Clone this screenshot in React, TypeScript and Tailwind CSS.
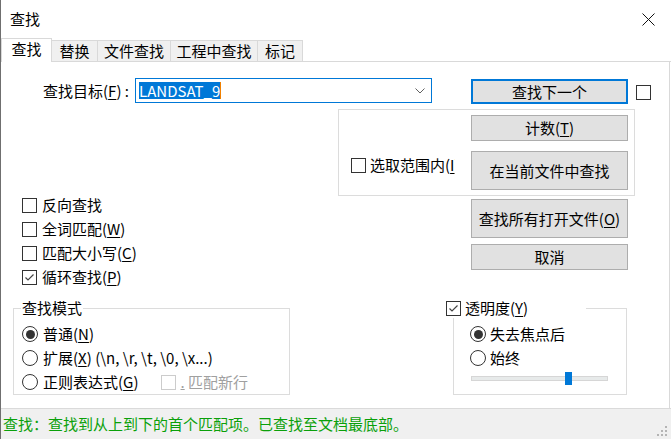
import type { ReactNode } from 'react';

function Key({ c }: { c: string }) {
  return (
    <>
      (<span className="underline underline-offset-2">{c}</span>)
    </>
  );
}

function Box({ checked = false, disabled = false }: { checked?: boolean; disabled?: boolean }) {
  return (
    <span
      className={`flex h-[15px] w-[15px] shrink-0 items-center justify-center border bg-white ${
        disabled ? 'border-[#cccccc]' : 'border-[#333333]'
      }`}
    >
      {checked && (
        <svg width="13" height="13" viewBox="0 0 13 13">
          <path d="M2.5 6.5 L5 9 L10.5 3.5" fill="none" stroke="#444" strokeWidth="1.2" />
        </svg>
      )}
    </span>
  );
}

function Radio({ checked = false }: { checked?: boolean }) {
  return (
    <span className="flex h-[16px] w-[16px] shrink-0 items-center justify-center rounded-full border border-[#333333] bg-white">
      {checked && <span className="h-[9px] w-[9px] rounded-full bg-[#333333]" />}
    </span>
  );
}

function Btn({ children, h, primary = false }: { children: ReactNode; h: string; primary?: boolean }) {
  return (
    <div
      className={`flex w-[157px] items-center justify-center bg-[#e1e1e1] ${h} ${
        primary ? 'border-2 border-[#0078d7]' : 'border border-[#adadad]'
      }`}
    >
      {children}
    </div>
  );
}

function Row({ children }: { children: ReactNode }) {
  return <div className="flex h-[24px] items-center gap-[5px] whitespace-nowrap">{children}</div>;
}

export default function App() {
  return (
    <div className="flex h-[439px] w-[671px] flex-col overflow-hidden border-l border-[#6f6f6f] bg-white font-['Noto_Sans_CJK_SC',sans-serif] text-[15px] leading-[20px] text-black">
      {/* title bar */}
      <div className="flex h-[38px] shrink-0 items-center justify-between pl-[9px] pr-[16px]">
        <span>查找</span>
        <svg width="13" height="13" viewBox="0 0 13 13">
          <path d="M0.5 0.5 L12.5 12.5 M12.5 0.5 L0.5 12.5" stroke="#111" strokeWidth="1" />
        </svg>
      </div>

      {/* tabs */}
      <div className="flex h-[24px] shrink-0 items-end">
        <div className="flex h-[24px] w-[51px] items-center justify-center border-x border-t border-[#d9d9d9] bg-white pb-[3px]">
          查找
        </div>
        {[
          ['替换', 'w-[46px]'],
          ['文件查找', 'w-[73px]'],
          ['工程中查找', 'w-[87px]'],
          ['标记', 'w-[45px]'],
        ].map(([t, w]) => (
          <div
            key={t}
            className={`flex h-[22px] items-center justify-center border-y border-r border-[#d9d9d9] bg-[#f0f0f0] ${w}`}
          >
            {t}
          </div>
        ))}
        <div className="h-[1px] flex-1 border-b border-[#d9d9d9]" />
      </div>

      {/* body */}
      <div className="mr-[1px] flex flex-1 flex-col border-r border-[#d9d9d9]">
        <div className="flex items-start pt-[16px]">
          <div className="flex h-[25px] w-[134px] items-center justify-end pr-[6px]">
            查找目标<Key c="F" />&nbsp;:
          </div>
          <div className="flex h-[25px] w-[297px] items-center border border-[#0078d7] pl-[3px] pr-[6px]">
            <span className="bg-[#0078d7] leading-[17px] text-white">LANDSAT_9</span>
            <span className="h-[17px] w-px bg-[#f08000]" />
            <span className="flex-1" />
            <svg width="10" height="6" viewBox="0 0 10 6">
              <path d="M0.5 0.5 L5 5 L9.5 0.5" fill="none" stroke="#606060" strokeWidth="1" />
            </svg>
          </div>
          <div className="ml-[39px] mt-[1px]">
            <Btn h="h-[25px]" primary>
              查找下一个
            </Btn>
          </div>
          <div className="ml-[8px] mt-[7px]">
            <Box />
          </div>
        </div>

        {/* scope group */}
        <div className="ml-[337px] mt-[5px] flex h-[87px] w-[297px] border border-[#dcdcdc]">
          <div className="ml-[12px] mt-[45px] flex h-[20px] w-[104px] items-center gap-[4px] overflow-hidden whitespace-nowrap">
            <Box />
            <span>
              选取范围内<Key c="I" />
            </span>
          </div>
          <div className="ml-[16px] flex flex-col gap-[10px] pt-[5px]">
            <Btn h="h-[26px]">
              <span>
                计数<Key c="T" />
              </span>
            </Btn>
            <Btn h="h-[39px]">在当前文件中查找</Btn>
          </div>
        </div>

        {/* options + buttons */}
        <div className="flex h-[102px]">
          <div className="-mt-[3px] flex w-[470px] flex-col pl-[21px]">
            <Row>
              <Box />
              <span>反向查找</span>
            </Row>
            <Row>
              <Box />
              <span>
                全词匹配<Key c="W" />
              </span>
            </Row>
            <Row>
              <Box />
              <span>
                匹配大小写<Key c="C" />
              </span>
            </Row>
            <Row>
              <Box checked />
              <span>
                循环查找<Key c="P" />
              </span>
            </Row>
          </div>
          <div className="flex flex-col gap-[6px] pt-[3px]">
            <Btn h="h-[39px]">
              <span>
                查找所有打开文件<Key c="O" />
              </span>
            </Btn>
            <Btn h="h-[26px]">取消</Btn>
          </div>
        </div>

        {/* mode + transparency */}
        <div className="flex items-start">
          <fieldset className="ml-[12px] h-[97px] w-[277px] border border-[#dcdcdc]">
            <legend className="ml-[7px] px-[1px] leading-[20px]">查找模式</legend>
            <div className="flex flex-col pl-[8px] pt-[4px]">
              <Row>
                <Radio checked />
                <span>
                  普通<Key c="N" />
                </span>
              </Row>
              <Row>
                <Radio />
                <span>
                  扩展<Key c="X" /> (\n, \r, \t, \0, \x...)
                </span>
              </Row>
              <Row>
                <Radio />
                <span>
                  正则表达式<Key c="G" />
                </span>
                <span className="ml-[17px]">
                  <Box disabled />
                </span>
                <span className="text-[#a0a0a0]">
                  <span className="underline">.</span> 匹配新行
                </span>
              </Row>
            </div>
          </fieldset>

          <fieldset className="ml-[163px] h-[97px] w-[174px] border border-[#dcdcdc]">
            <legend className="-ml-[8px] w-[140px] bg-white leading-[20px]">
              <span className="flex items-center gap-[4px]">
                <Box checked />
                <span>
                  透明度<Key c="Y" />
                </span>
              </span>
            </legend>
            <div className="flex flex-col pl-[16px] pt-[4px]">
              <div className="flex h-[24px] items-center gap-[4px]">
                <Radio checked />
                <span>失去焦点后</span>
              </div>
              <div className="flex h-[24px] items-center gap-[4px]">
                <Radio />
                <span>始终</span>
              </div>
              <div className="relative ml-[1px] mt-[6px] h-[5px] w-[137px] border border-[#d6d6d6] bg-[#e7eaea]">
                <div className="absolute -top-[5px] left-[93px] h-[13px] w-[7px] bg-[#0078d7]" />
              </div>
            </div>
          </fieldset>
        </div>
      </div>

      {/* status bar */}
      <div className="flex h-[31px] shrink-0 items-center justify-between border-t border-[#dadada] bg-[#f0f0f0] pl-[2px]">
        <span className="text-[#0aa00a]">查找：查找到从上到下的首个匹配项。已查找至文档最底部。</span>
        <svg className="mb-[1px] mr-[2px] self-end" width="12" height="12" viewBox="0 0 12 12" fill="#b4b4b4">
          <rect x="8" y="0" width="2" height="2" />
          <rect x="4" y="4" width="2" height="2" />
          <rect x="8" y="4" width="2" height="2" />
          <rect x="0" y="8" width="2" height="2" />
          <rect x="4" y="8" width="2" height="2" />
          <rect x="8" y="8" width="2" height="2" />
        </svg>
      </div>
    </div>
  );
}
